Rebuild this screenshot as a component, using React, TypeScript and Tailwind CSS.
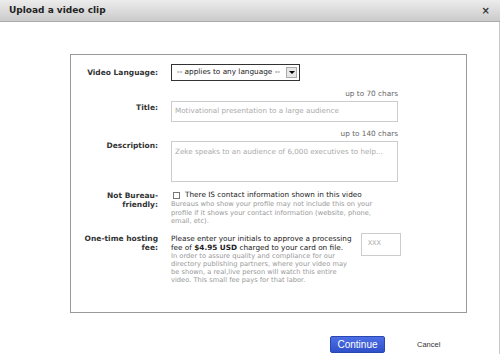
import React from 'react'

const labelCls = "w-[87px] shrink-0 text-right font-bold text-[7.5px] leading-[9px] text-[#333]"

const App = () => {
  return (
    <div className="relative w-[500px] h-[354px] bg-white overflow-hidden font-['DejaVu_Sans',Verdana,sans-serif]">
      {/* header */}
      <div className="h-[22px] flex items-center justify-between px-[9px] bg-gradient-to-b from-[#ececec] to-[#cbcbcb] border-b border-[#a9a9a9]">
        <span className="font-bold text-[9px] text-[#222]">Upload a video clip</span>
        <span className="font-bold text-[10px] text-[#333] leading-none mr-[1px]">×</span>
      </div>
      <div className="absolute right-0 top-[22px] bottom-0 w-px bg-[#c8c8c8]" />

      <div className="ml-[70px] mt-[32px] w-[397px] h-[259px] border border-[#9a9a9a] pt-[9px]">
        {/* language */}
        <div className="flex gap-[13px] items-center">
          <div className={labelCls}>Video Language:</div>
          <div className="w-[129px] h-[17px] border border-[#333] flex items-center justify-between pl-[5px] pr-[2px] bg-white">
            <span className="text-[7.3px] text-[#222] whitespace-nowrap">-- applies to any language --</span>
            <span className="w-[11px] h-[11px] bg-[#e6e6e6] border border-[#aaa] flex items-center justify-center">
              <span className="w-0 h-0 border-l-[3px] border-r-[3px] border-t-[3px] border-l-transparent border-r-transparent border-t-black" />
            </span>
          </div>
        </div>

        {/* title */}
        <div className="flex gap-[13px] mt-[8px]">
          <div className={labelCls + " pt-[14px]"}>Title:</div>
          <div className="w-[227px]">
            <div className="text-right text-[7.3px] leading-[9px] text-[#666]">up to 70 chars</div>
            <div className="mt-[3px] h-[21px] border border-[#ccc] flex items-center px-[3px] text-[7.2px] text-[#aaa] whitespace-nowrap">
              Motivational presentation to a large audience
            </div>
          </div>
        </div>

        {/* description */}
        <div className="flex gap-[13px] mt-[7px]">
          <div className={labelCls + " pt-[12px]"}>Description:</div>
          <div className="w-[227px]">
            <div className="text-right text-[7.3px] leading-[9px] text-[#666]">up to 140 chars</div>
            <div className="mt-[3px] h-[41px] border border-[#ccc] px-[3px] pt-[5px] text-[7.2px] text-[#aaa] whitespace-nowrap">
              Zeke speaks to an audience of 6,000 executives to help...
            </div>
          </div>
        </div>

        {/* not bureau friendly */}
        <div className="flex gap-[13px] mt-[8px]">
          <div className={labelCls + " pt-[1px]"}>Not Bureau-<br />friendly:</div>
          <div>
            <div className="flex items-center text-[7.3px] leading-[10px] text-[#222]">
              <span className="ml-[2px] mr-[5px] w-[7px] h-[7px] border border-[#777] bg-white" />
              There IS contact information shown in this video
            </div>
            <div className="text-[6.7px] leading-[8.5px] text-[#999]">
              Bureaus who show your profile may not include this on your<br />
              profile if it shows your contact information (website, phone,<br />
              email, etc).
            </div>
          </div>
        </div>

        {/* hosting fee */}
        <div className="flex gap-[13px] mt-[7px]">
          <div className={labelCls + " pt-[1px]"}>One-time hosting<br />fee:</div>
          <div className="flex gap-[9px] items-start">
            <div className="pt-[1px]">
              <div className="text-[7.3px] leading-[9px] text-[#222]">
                Please enter your initials to approve a processing<br />
                fee of <b>$4.95 USD</b> charged to your card on file.
              </div>
              <div className="text-[6.7px] leading-[8px] text-[#999]">
                In order to assure quality and compliance for our<br />
                directory publishing partners, where your video may<br />
                be shown, a real,live person will watch this entire<br />
                video. This small fee pays for that labor.
              </div>
            </div>
            <div className="w-[40px] h-[23px] border border-[#ccc] flex items-center pl-[6px] text-[6.5px] text-[#aaa]">XXX</div>
          </div>
        </div>
      </div>

      {/* footer */}
      <div className="flex items-center mt-[23px] ml-[330px] gap-[32px]">
        <div className="w-[55px] h-[17px] rounded-[2px] bg-gradient-to-b from-[#4d6fe6] to-[#2f50c9] border border-[#2a46b0] flex items-center justify-center text-white text-[10px] font-['Liberation_Sans',Arial,sans-serif]">
          Continue
        </div>
        <span className="text-[7.5px] text-[#333] font-['Liberation_Sans',Arial,sans-serif]">Cancel</span>
      </div>
    </div>
  )
}

export default App
